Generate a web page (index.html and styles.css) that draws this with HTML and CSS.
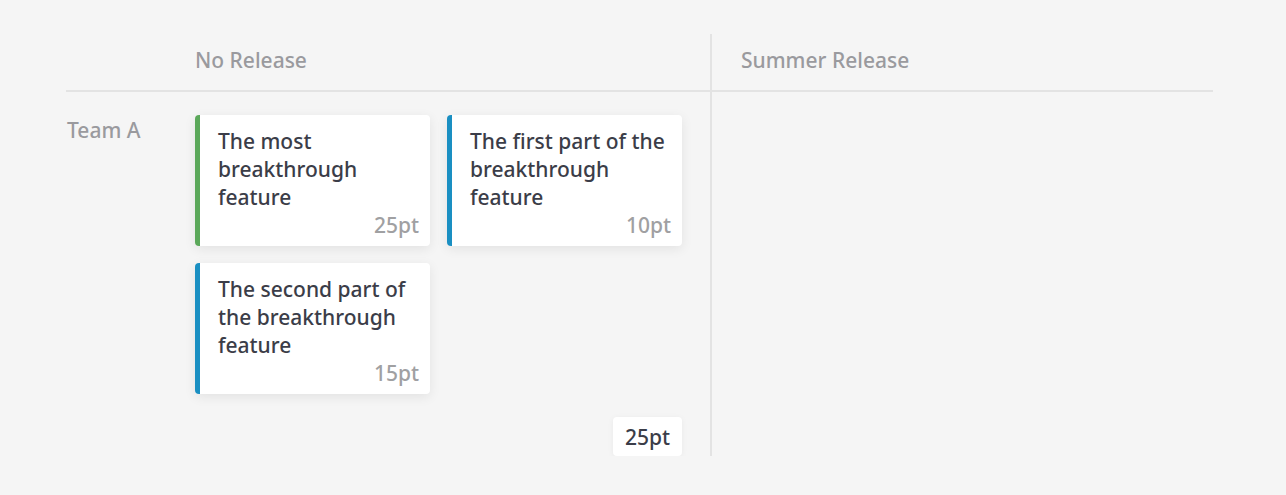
FILE: index.html
```html
<!DOCTYPE html>
<html lang="en">
<head>
<meta charset="utf-8">
<title>Board</title>
<link rel="stylesheet" href="styles.css">
</head>
<body>
<div class="board">
  <div class="head head-empty"></div>
  <div class="head head-col divider">No Release</div>
  <div class="head head-col head-last">Summer Release</div>

  <div class="row-label">Team A</div>
  <div class="cell divider">
    <div class="cards">
      <div class="card green">
        <div class="card-title">The most breakthrough feature</div>
        <div class="card-pts">25pt</div>
      </div>
      <div class="card blue">
        <div class="card-title">The first part of the breakthrough feature</div>
        <div class="card-pts">10pt</div>
      </div>
      <div class="card blue">
        <div class="card-title">The second part of the breakthrough feature</div>
        <div class="card-pts">15pt</div>
      </div>
    </div>
    <div class="total-wrap"><div class="total">25pt</div></div>
  </div>
  <div class="cell cell-last"></div>
</div>
</body>
</html>
```

FILE: styles.css
```css
html, body {
  margin: 0;
  padding: 0;
  background: #f5f5f5;
  font-family: "Noto Sans", "Open Sans", sans-serif;
  font-weight: 500;
}

.board {
  display: grid;
  grid-template-columns: 129px 517px 1fr;
  padding: 34px 73px 0 66px;
}

.head {
  height: 58px;
  box-sizing: border-box;
  padding-bottom: 4px;
  border-bottom: 2px solid #e3e3e3;
  font-size: 21px;
  line-height: 28px;
  color: #9a9a9e;
  display: flex;
  align-items: center;
}

.head-last {
  padding-left: 29px;
}

.divider {
  border-right: 2px solid #e3e3e3;
}

.row-label {
  padding: 24px 0 0 1px;
  font-size: 21px;
  line-height: 28px;
  color: #9a9a9e;
}

.cell {
  padding: 23px 28px 0 0;
}

.cards {
  display: grid;
  grid-template-columns: 235px 235px;
  gap: 17px;
}

.card {
  background: #ffffff;
  border-radius: 4px;
  border-left: 5px solid #1a8fc2;
  box-shadow: 0 3px 12px rgba(0, 0, 0, 0.08);
  padding: 12px 11px 10px 18px;
  height: 131px;
  box-sizing: border-box;
  display: flex;
  flex-direction: column;
}

.card.green {
  border-left-color: #5ba85a;
}

.card.blue {
  border-left-color: #1a8fc2;
}

.card-title {
  font-size: 21px;
  line-height: 28px;
  color: #3b3d48;
}

.card-pts {
  margin-top: auto;
  text-align: right;
  font-size: 21px;
  line-height: 28px;
  color: #a0a0a2;
}

.total-wrap {
  display: flex;
  justify-content: flex-end;
  margin-top: 23px;
}

.total {
  background: #ffffff;
  border-radius: 4px;
  box-shadow: 0 1px 6px rgba(0, 0, 0, 0.05);
  height: 39px;
  box-sizing: border-box;
  padding: 0 12px;
  display: flex;
  align-items: center;
  font-size: 21px;
  color: #3b3d48;
}
```
